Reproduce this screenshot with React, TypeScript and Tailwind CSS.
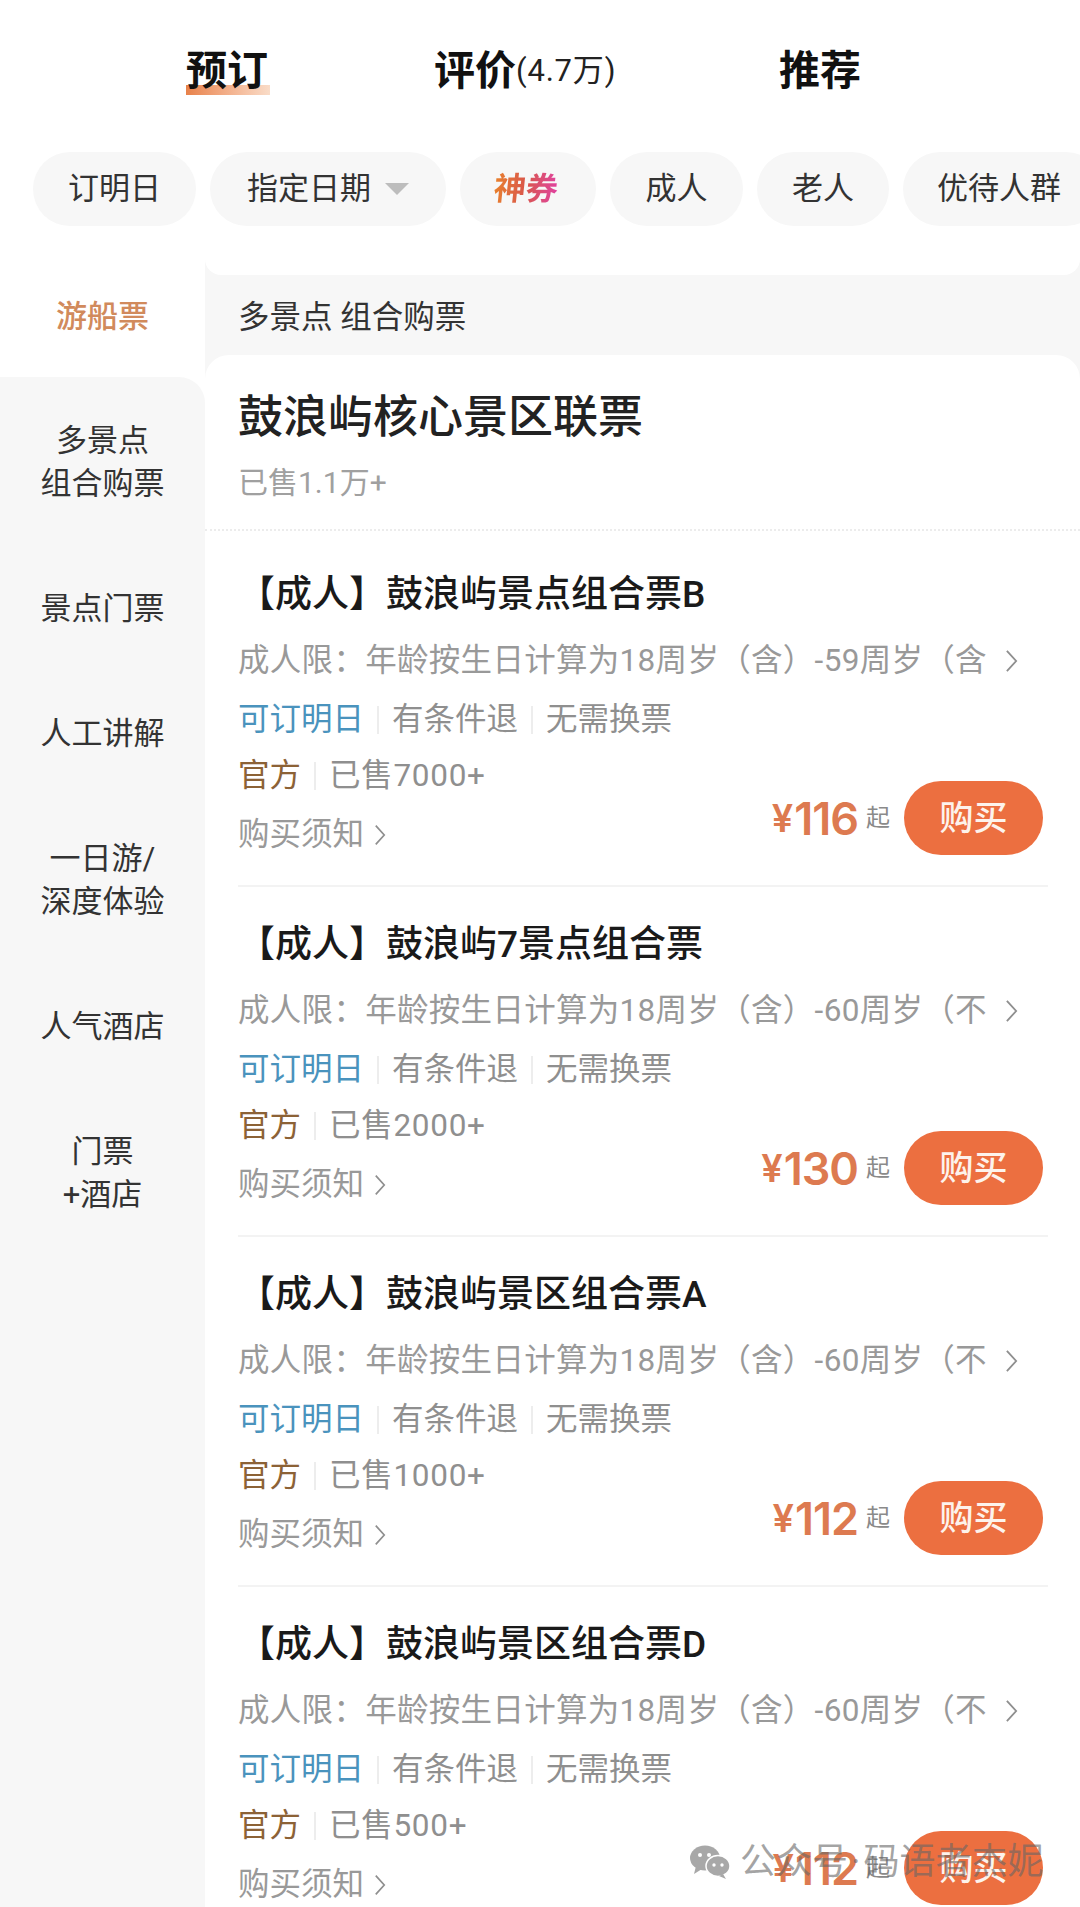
const cjk = "font-['Roboto','Noto_Sans_CJK_SC',sans-serif]";

const side = [
  { l: ['多景点', '组合购票'] },
  { l: ['景点门票'] },
  { l: ['人工讲解'] },
  { l: ['一日游/', '深度体验'] },
  { l: ['人气酒店'] },
  { l: ['门票', '+酒店'] },
];

const items = [
  { t: '【成人】鼓浪屿景点组合票B', a: '59周岁（含', s: '已售7000+', p: '116' },
  { t: '【成人】鼓浪屿7景点组合票', a: '60周岁（不', s: '已售2000+', p: '130' },
  { t: '【成人】鼓浪屿景区组合票A', a: '60周岁（不', s: '已售1000+', p: '112' },
  { t: '【成人】鼓浪屿景区组合票D', a: '60周岁（不', s: '已售500+', p: '112' },
];

function Chevron({ cls }: { cls: string }) {
  return (
    <svg viewBox="0 0 14 26" className={cls} fill="none" stroke="#8f8f8f" strokeWidth="2">
      <path d="M2 2l10 11L2 24" />
    </svg>
  );
}

function Sep() {
  return <span className="mx-[13px] h-[28px] w-[2px] bg-[#ededed]" />;
}

function Item({ t, a, s, p }: { t: string; a: string; s: string; p: string }) {
  return (
    <div className="mr-[32px] h-[350px] shrink-0 border-b-2 border-[#f3f3f3] pt-[29px]">
      <div className="flex h-[58px] items-center text-[37px] font-medium text-[#1a1a1a]">{t}</div>
      <div className="mt-[8px] flex h-[58px] items-center text-[31.5px] text-[#999999]">
        <span className="w-[762px] overflow-hidden whitespace-nowrap tracking-[0.3px]">成人限：年龄按生日计算为18周岁（含）-{a}</span>
        <Chevron cls="ml-[5px] h-[24px] w-[13px]" />
      </div>
      <div className="mt-[1px] flex h-[58px] items-center text-[31.5px] text-[#8f8f8f]">
        <span className="text-[#4a93bd]">可订明日</span>
        <Sep />
        <span>有条件退</span>
        <Sep />
        <span>无需换票</span>
      </div>
      <div className="flex h-[116px] items-start justify-between">
        <div>
          <div className="flex h-[54px] items-center text-[31.5px] text-[#8f8f8f]">
            <span className="text-[#8c6236]">官方</span>
            <Sep />
            <span className="tracking-[0.7px]">{s}</span>
          </div>
          <div className="flex h-[64px] items-center text-[31.5px] text-[#999999]">
            购买须知
            <Chevron cls="ml-[10px] h-[22px] w-[12px]" />
          </div>
        </div>
        <div className="mr-[5px] mt-[32px] flex items-center">
          <span className="font-['Inter'] text-[38px] font-semibold text-[#dd7a50]">¥</span>
          <span className="ml-[1px] font-['Inter'] text-[45px] font-semibold leading-none tracking-[-1px] text-[#dd7a50]">{p}</span>
          <span className="ml-[8px] mr-[14px] text-[24px] text-[#8a8a8a]">起</span>
          <div className="flex h-[74px] w-[139px] items-center justify-center rounded-full bg-[#ec6f40] text-[34px] font-medium text-[#fdf3ec]">
            购买
          </div>
        </div>
      </div>
    </div>
  );
}

export default function App() {
  return (
    <div className={`relative h-[1907px] w-[1080px] overflow-hidden bg-white ${cjk}`}>
      <div className="flex h-[152px] pl-[186px] pt-[46px]">
        <div className="relative h-[50px] w-[248px]">
          <span className="absolute left-0 top-[39px] h-[10px] w-[84px] bg-linear-to-r from-[#e8824a] to-[#f9dcc8]" />
          <span className="relative text-[41px] font-bold leading-[50px] text-[#111111]">预订</span>
        </div>
        <div className="flex h-[50px] w-[346px] items-center">
          <span className="text-[41px] font-bold leading-[50px] text-[#111111]">评价</span>
          <span className="text-[31px] tracking-[0.8px] text-[#222222]">(4.7万)</span>
        </div>
        <span className="-ml-[1px] text-[41px] font-bold leading-[50px] text-[#111111]">推荐</span>
      </div>

      <div className="flex h-[107px] gap-[14px] overflow-hidden pl-[33px] text-[31px] text-[#333333]">
        <div className="flex h-[74px] w-[163px] shrink-0 items-center justify-center rounded-[37px] bg-[#f7f7f7]">订明日</div>
        <div className="flex h-[74px] w-[236px] shrink-0 items-center justify-center gap-[14px] rounded-[37px] bg-[#f7f7f7]">
          指定日期
          <svg viewBox="0 0 24 12" className="h-[12px] w-[24px]"><path d="M0 0h24L12 12z" fill="#bdbdbd" /></svg>
        </div>
        <div className="flex h-[74px] w-[136px] shrink-0 items-center justify-center rounded-[37px] bg-[#f7f7f7] pr-[4px]">
          <span className="inline-block -skew-x-6 bg-linear-to-r from-[#e8802a] via-[#d9554a] to-[#e040a0] bg-clip-text text-[32px] font-bold text-transparent">神券</span>
        </div>
        <div className="flex h-[74px] w-[133px] shrink-0 items-center justify-center rounded-[37px] bg-[#f7f7f7]">成人</div>
        <div className="flex h-[74px] w-[132px] shrink-0 items-center justify-center rounded-[37px] bg-[#f7f7f7]">老人</div>
        <div className="flex h-[74px] w-[200px] shrink-0 items-center rounded-[37px] bg-[#f7f7f7] pl-[34px]">优待人群</div>
      </div>

      <div className="flex h-[1648px]">
        <div className="w-[205px] shrink-0 text-center text-[31px] leading-[43px] text-[#333333]">
          <div className="flex h-[118px] items-center justify-center pb-[4px] font-medium text-[#d18a5c]">游船票</div>
          <div className="h-full rounded-tr-[26px] bg-[#f7f7f7] pt-[42px]">
            {side.map((x) => (
              <div key={x.l[0]} className="pb-[82px]">
                {x.l.map((v) => (
                  <div key={v}>{v}</div>
                ))}
              </div>
            ))}
          </div>
        </div>
        <div className="flex min-w-0 flex-1 flex-col bg-[#f7f7f7]">
          <div className="h-[16px] shrink-0 rounded-b-[24px] bg-white" />
          <div className="flex h-[80px] shrink-0 items-center pl-[33px] pt-[6px] text-[31.5px] text-[#333333]">多景点 组合购票</div>
          <div className="min-h-0 flex-1 rounded-t-[24px] bg-white pl-[33px]">
            <div className="-ml-[33px] h-[176px] border-b-2 border-dotted border-[#ececec] pl-[33px] pt-[34px]">
              <div className="h-[58px] text-[45px] font-medium leading-[58px] text-[#222222]">鼓浪屿核心景区联票</div>
              <div className="mt-[16px] text-[30px] leading-[40px] text-[#a0a0a0]">已售1.1万+</div>
            </div>
            <div className="h-[6px]" />
            {items.map((x) => (
              <Item key={x.t} {...x} />
            ))}
          </div>
        </div>
      </div>

      <div className="absolute left-[690px] top-[1844px] flex h-[36px] items-center text-[36px] text-[#66666699]">
        <svg viewBox="0 0 40 34" className="mr-[10px] h-[34px] w-[40px]" fill="#a8a8a8">
          <ellipse cx="15" cy="13" rx="15" ry="12.5" />
          <path d="M6 21l-2 8 8-5z" />
          <ellipse cx="28" cy="21" rx="12" ry="10.5" fill="#a8a8a8" stroke="#fff" strokeWidth="1.5" />
          <path d="M33 29l3 5-7-3z" />
          <circle cx="10" cy="10" r="2" fill="#fff" />
          <circle cx="19" cy="10" r="2" fill="#fff" />
          <circle cx="24" cy="20" r="1.7" fill="#fff" />
          <circle cx="32" cy="20" r="1.7" fill="#fff" />
        </svg>
        公众号<span className="mx-[3px]">·</span>码语者杰妮
      </div>
    </div>
  );
}
